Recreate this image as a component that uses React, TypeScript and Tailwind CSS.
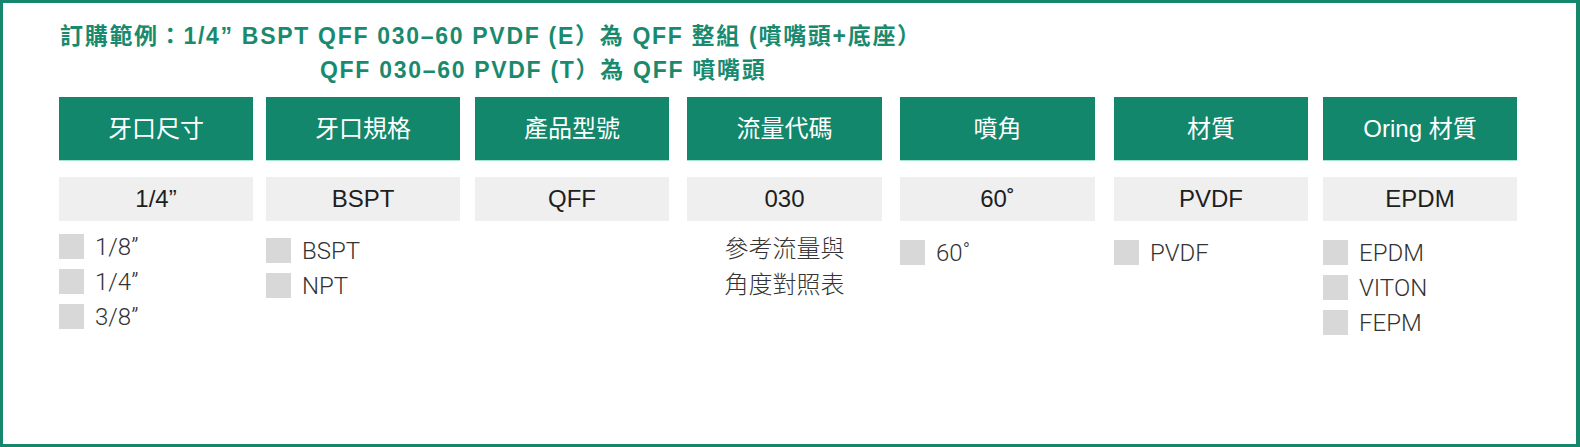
import React from 'react';

const sans = "font-['Liberation_Sans','Noto_Sans_CJK_TC',sans-serif]";
const light = "font-['Roboto','Noto_Sans_CJK_TC',sans-serif]";

type Col = {
  title: string;
  value: string;
  options?: string[];
  note?: string[];
  offset: string;
  box: string;
};

const columns: Col[] = [
  { title: '牙口尺寸', value: '1/4”', options: ['1/8”', '1/4”', '3/8”'], offset: 'mt-[8px]', box: 'w-[194px]' },
  { title: '牙口規格', value: 'BSPT', options: ['BSPT', 'NPT'], offset: 'mt-[12px]', box: 'w-[194px] ml-[13px]' },
  { title: '產品型號', value: 'QFF', offset: 'mt-[12px]', box: 'w-[194px] ml-[15px]' },
  { title: '流量代碼', value: '030', note: ['參考流量與', '角度對照表'], offset: 'mt-[10px]', box: 'w-[195px] ml-[18px]' },
  { title: '噴角', value: '60˚', options: ['60˚'], offset: 'mt-[14px]', box: 'w-[195px] ml-[18px]' },
  { title: '材質', value: 'PVDF', options: ['PVDF'], offset: 'mt-[14px]', box: 'w-[194px] ml-[19px]' },
  { title: 'Oring 材質', value: 'EPDM', options: ['EPDM', 'VITON', 'FEPM'], offset: 'mt-[14px]', box: 'w-[194px] ml-[15px]' },
];

export default function App() {
  return (
    <div className="w-[1580px] h-[447px] bg-white border-[3px] border-r-4 border-[#14876c] overflow-hidden">
      <div className={`pl-[57px] pt-[16px] text-[23px] leading-[34px] font-bold tracking-[1.7px] text-[#1a8a6f] ${sans}`}>
        <p>訂購範例：1/4” BSPT QFF 030–60 PVDF (E）為 QFF 整組 (噴嘴頭+底座）</p>
        <p className="pl-[260px]">QFF 030–60 PVDF (T）為 QFF 噴嘴頭</p>
      </div>

      <div className="flex pl-[56px] mt-[10px]">
        {columns.map((col) => (
          <div key={col.title} className={`flex flex-col shrink-0 ${col.box}`}>
            <div className={`h-[64px] bg-[#12876b] border-b border-[#a6e3d0] flex items-center justify-center text-white text-[24px] ${sans}`}>
              {col.title}
            </div>
            <div className={`mt-[16px] h-[44px] bg-[#efefef] flex items-center justify-center text-[24px] text-[#1e1e1e] ${sans}`}>
              {col.value}
            </div>
            {col.options && (
              <div className={`flex flex-col ${col.offset}`}>
                {col.options.map((opt) => (
                  <div key={opt} className="flex items-center gap-[11px] h-[35px]">
                    <span className="w-[25px] h-[25px] bg-[#d8d8d8] shrink-0" />
                    <span className={`text-[24px] font-light text-[#333] ${light}`}>{opt}</span>
                  </div>
                ))}
              </div>
            )}
            {col.note && (
              <div className={`${col.offset} text-center text-[24px] leading-[36px] font-light text-[#333] ${light}`}>
                {col.note.map((line) => (
                  <p key={line}>{line}</p>
                ))}
              </div>
            )}
          </div>
        ))}
      </div>
    </div>
  );
}
